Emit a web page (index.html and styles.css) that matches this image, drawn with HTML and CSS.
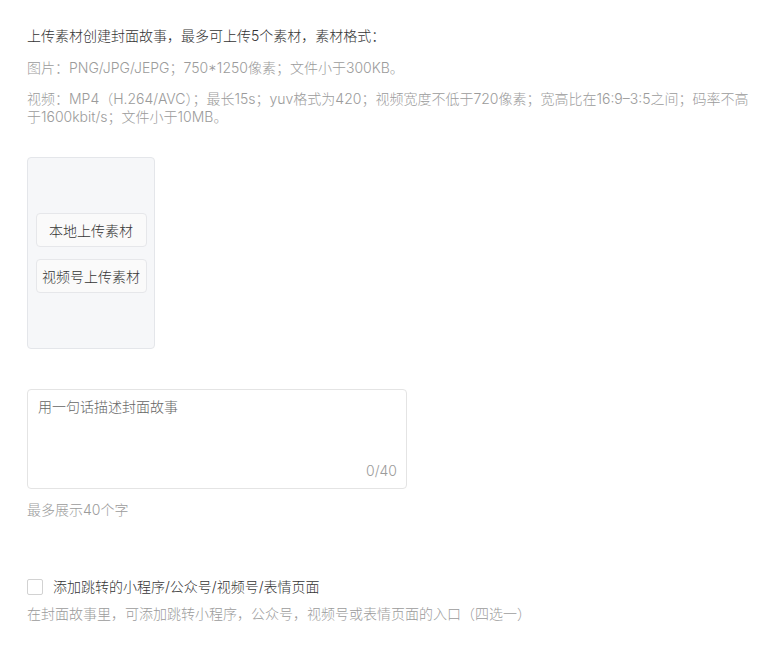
FILE: index.html
```html
<!DOCTYPE html>
<html lang="zh">
<head>
<meta charset="utf-8">
<link rel="stylesheet" href="styles.css">
</head>
<body>
<div class="page">
  <div class="intro">
    <p class="lead">上传素材创建封面故事，最多可上传5个素材，素材格式：</p>
    <p class="spec">图片：PNG/JPG/JEPG；750*1250像素；文件小于300KB。</p>
    <p class="spec">视频：MP4（H.264/AVC）；最长15s；yuv格式为420；视频宽度不低于720像素；宽高比在16:9–3:5之间；码率不高于1600kbit/s；文件小于10MB。</p>
  </div>

  <div class="upload">
    <button class="upload-btn" type="button">本地上传素材</button>
    <button class="upload-btn" type="button">视频号上传素材</button>
  </div>

  <div class="story">
    <div class="textarea">
      <span class="placeholder">用一句话描述封面故事</span>
      <span class="counter">0/40</span>
    </div>
    <p class="hint">最多展示40个字</p>
  </div>

  <div class="jump">
    <label class="check">
      <span class="box"></span>
      <span class="check-label">添加跳转的小程序/公众号/视频号/表情页面</span>
    </label>
    <p class="hint">在封面故事里，可添加跳转小程序，公众号，视频号或表情页面的入口（四选一）</p>
  </div>
</div>
</body>
</html>
```

FILE: styles.css
```css
* { box-sizing: border-box; }
html, body { margin: 0; padding: 0; background: #fff; }
body {
  font-family: Inter, "Noto Sans CJK SC", sans-serif;
  font-size: 14px;
  font-weight: 300;
  color: #353535;
}
p { margin: 0; }
.page {
  padding: 26px 30px 0 27px;
  display: flex;
  flex-direction: column;
  align-items: flex-start;
}
.intro { display: flex; flex-direction: column; gap: 13px; }
.lead { line-height: 20px; color: #333; }
.spec { line-height: 18px; color: #9b9b9b; }
.upload {
  margin-top: 31px;
  width: 128px;
  height: 192px;
  background: #f6f7f9;
  border: 1px solid #e4e6ea;
  border-radius: 4px;
  display: flex;
  flex-direction: column;
  align-items: center;
  justify-content: center;
  gap: 12px;
}
.upload-btn {
  width: 111px;
  height: 34px;
  background: #fafafa;
  border: 1px solid #e6e7ea;
  border-radius: 4px;
  font-family: inherit;
  font-weight: inherit;
  font-size: 14px;
  color: #353535;
  padding: 0;
}
.story { margin-top: 40px; }
.textarea {
  width: 380px;
  height: 100px;
  border: 1px solid #e4e4e4;
  border-radius: 4px;
  padding: 7px 9px 7px 10px;
  display: flex;
  flex-direction: column;
  justify-content: space-between;
}
.placeholder { color: #666; line-height: 20px; }
.counter { align-self: flex-end; color: #9b9b9b; line-height: 20px; }
.hint { color: #9b9b9b; line-height: 20px; margin-top: 11px; }
.jump { margin-top: 57px; }
.check { display: flex; align-items: center; gap: 10px; }
.box {
  width: 16px; height: 16px;
  border: 1px solid #d2d2d2;
  border-radius: 2px;
  background: #fff;
}
.check-label { color: #353535; line-height: 20px; }
.jump .hint { margin-top: 7px; }
```
